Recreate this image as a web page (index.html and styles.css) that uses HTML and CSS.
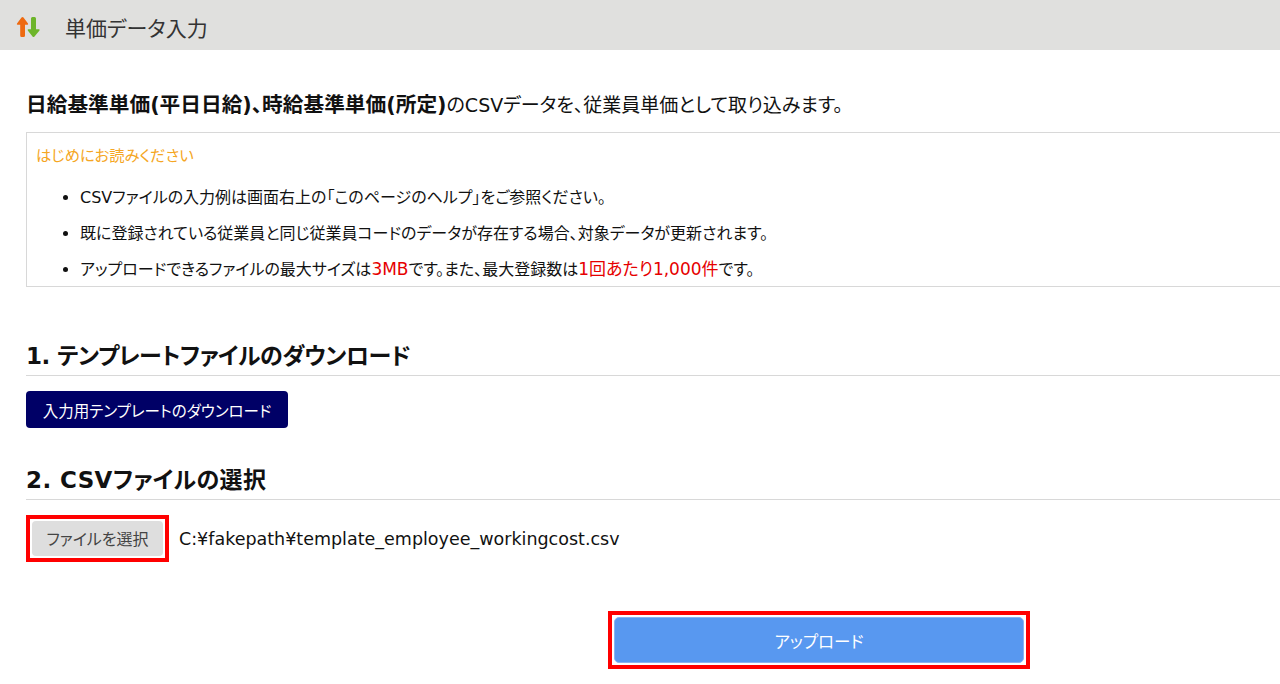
FILE: index.html
```html
<!DOCTYPE html>
<html lang="ja">
    <head>
        <meta charset="utf-8">
        <title>単価データ入力</title>
        <link rel="stylesheet" href="styles.css">
    </head>
    <body>
        <header class="page-header">
            <svg class="header-icon" width="25" height="22" viewBox="0 0 25 22">
                <path d="M6.5 1 Q7 1 7.5 1.6 L12 7.6 Q12.6 8.8 11.3 8.8 H9 V19.5 Q9 21 7.6 21 H5.6 Q4.2 21 4.2 19.5 V8.8 H1.7 Q.4 8.8 1 7.6 L5.5 1.6 Q6 1 6.5 1 Z" fill="#ee6a10"/>
                <path d="M17.5 21 Q17 21 16.5 20.4 L11.8 14.4 Q11.2 13.2 12.5 13.2 H15 V2.5 Q15 1 16.4 1 H18.6 Q20 1 20 2.5 V13.2 H22.8 Q24.1 13.2 23.5 14.4 L18.5 20.4 Q18 21 17.5 21 Z" fill="#6db52a"/>
            </svg>
            <h1 class="page-title">単価データ入力</h1>
        </header>
        <main class="content">
            <p class="lead"><strong>日給基準単価(平日日給)、時給基準単価(所定)</strong>のCSVデータを、従業員単価として取り込みます。</p>
            <section class="notice">
                <div class="notice-title">はじめにお読みください</div>
                <ul class="notice-list">
                    <li>CSVファイルの入力例は画面右上の「このページのヘルプ」をご参照ください。</li>
                    <li>既に登録されている従業員と同じ従業員コードのデータが存在する場合、対象データが更新されます。</li>
                    <li>アップロードできるファイルの最大サイズは<span class="red">3MB</span>です。また、最大登録数は<span class="red">1回あたり1,000件</span>です。</li>
                </ul>
            </section>
            <h2 class="step-title step-first">1. テンプレートファイルのダウンロード</h2>
            <button class="btn-download">入力用テンプレートのダウンロード</button>
            <h2 class="step-title step-second">2. CSVファイルの選択</h2>
            <div class="file-row">
                <div class="highlight">
                    <button class="btn-file">ファイルを選択</button>
                </div>
                <span class="file-name">C:¥fakepath¥template_employee_workingcost.csv</span>
            </div>
            <div class="upload-row">
                <div class="highlight">
                    <button class="btn-upload">アップロード</button>
                </div>
            </div>
        </main>
    </body>
</html>
```

FILE: styles.css
```css
html, body {
    margin: 0;
    padding: 0;
    overflow: hidden;
}

body {
    height: 684px;
    background-color: #fff;
    color: #111;
    font-family: "DejaVu Sans", "Noto Sans CJK JP", sans-serif;
    font-feature-settings: "palt";
    font-size: 16px;
}

button {
    font-family: inherit;
    font-feature-settings: inherit;
    cursor: pointer;
}

.page-header {
    display: flex;
    align-items: center;
    height: 50px;
    padding-left: 16px;
    background-color: #e0e0de;
}

.header-icon {
    flex: none;
    margin-top: 4px;
}

.page-title {
    margin: 3px 0 0 24px;
    color: #333;
    font-size: 21px;
    font-weight: normal;
}

.content {
    padding-left: 26px;
}

.lead {
    height: 26px;
    margin: 42px 0 0;
    font-size: 19px;
    line-height: 26px;
    white-space: nowrap;
}

.lead strong {
    font-size: 20.7px;
}

.notice {
    width: 1400px;
    height: 155px;
    margin-top: 14px;
    border: 1px solid #d8d8d8;
    box-sizing: border-box;
    padding: 11px 9px 0;
}

.notice-title {
    color: #f5a623;
    font-size: 15.3px;
    line-height: 24px;
}

.notice-list {
    margin: 16px 0 0;
    padding-left: 44px;
}

.notice-list li {
    height: 36px;
    line-height: 28px;
}

.red {
    color: #e60000;
    font-size: 17px;
    line-height: 1;
}

.step-title {
    margin: 0;
    border-bottom: 1px solid #d8d8d8;
    width: 1400px;
    color: #111;
    font-size: 23px;
    line-height: 38px;
    padding-top: 1px;
}

.step-first {
    margin-top: 49px;
    letter-spacing: -0.5px;
}

.step-second {
    margin-top: 32px;
    letter-spacing: 0.4px;
}

.btn-download {
    display: block;
    width: 262px;
    height: 37px;
    margin-top: 15px;
    padding: 0;
    border: none;
    border-radius: 4px;
    background-color: #000066;
    color: #fff;
    font-size: 15.5px;
}

.file-row {
    display: flex;
    align-items: center;
    margin-top: 15px;
}

.highlight {
    border: 4px solid #f00;
    padding: 2px;
    background-color: #fff;
}

.btn-file {
    display: block;
    width: 131px;
    height: 35px;
    padding: 0 0 2px;
    border: none;
    border-radius: 4px;
    background-color: #dedede;
    color: #444;
    font-size: 16px;
}

.file-name {
    margin-left: 10px;
    font-size: 17.5px;
}

.upload-row {
    margin: 49px 0 0 582px;
}

.upload-row .highlight {
    width: 410px;
}

.btn-upload {
    display: block;
    width: 100%;
    height: 46px;
    padding: 2px 0 0;
    border: 1px solid #8ab4f0;
    border-radius: 5px;
    background-color: #5898f0;
    color: #fff;
    font-size: 16.5px;
}
```
